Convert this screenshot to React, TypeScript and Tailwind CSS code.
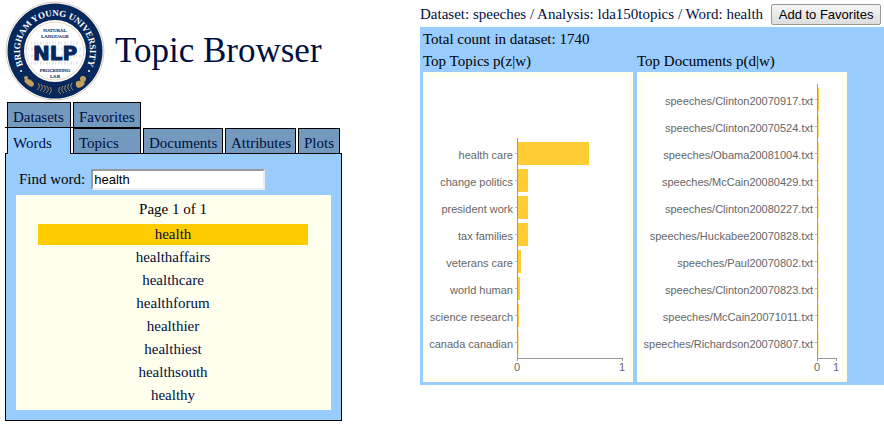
type Datum = { label: string; value: number; opacity?: number };

const topics: Datum[] = [
  { label: "health care", value: 71 },
  { label: "change politics", value: 10 },
  { label: "president work", value: 10 },
  { label: "tax families", value: 10 },
  { label: "veterans care", value: 3 },
  { label: "world human", value: 2 },
  { label: "science research", value: 1 },
  { label: "canada canadian", value: 1, opacity: 0.5 },
];

const documents: Datum[] = [
  { label: "speeches/Clinton20070917.txt", value: 1, opacity: 1 },
  { label: "speeches/Clinton20070524.txt", value: 1, opacity: 0.7 },
  { label: "speeches/Obama20081004.txt", value: 1, opacity: 0.6 },
  { label: "speeches/McCain20080429.txt", value: 1, opacity: 0.5 },
  { label: "speeches/Clinton20080227.txt", value: 1, opacity: 0.5 },
  { label: "speeches/Huckabee20070828.txt", value: 1, opacity: 0.4 },
  { label: "speeches/Paul20070802.txt", value: 1, opacity: 0.4 },
  { label: "speeches/Clinton20070823.txt", value: 1, opacity: 0.4 },
  { label: "speeches/McCain20071011.txt", value: 1, opacity: 0.4 },
  { label: "speeches/Richardson20070807.txt", value: 1, opacity: 0.4 },
];

const words = [
  "health",
  "healthaffairs",
  "healthcare",
  "healthforum",
  "healthier",
  "healthiest",
  "healthsouth",
  "healthy",
];

function Logo() {
  const waves = [0, 1, 2, 3, 4];
  return (
    <svg viewBox="0 0 100 100" className="size-[100px] shrink-0" role="img" aria-label="BYU NLP Lab">
      <defs>
        <path id="ring" d="M 22 71 A 35 35 0 1 1 78 71" />
      </defs>
      <circle cx="50" cy="50" r="49" fill="#fff" stroke="#d8cdb8" strokeWidth="1" />
      <circle cx="50" cy="50" r="47.500" fill="#06285c" />
      <circle cx="50" cy="50" r="31" fill="#fff" />
      <circle cx="50" cy="50" r="29" fill="#fff" stroke="#e3d8bf" strokeWidth="1" />
      <text fill="#fff" className="font-['Liberation_Serif',serif] text-[9px] font-bold">
        <textPath href="#ring" startOffset="50%" textAnchor="middle">
          BRIGHAM YOUNG UNIVERSITY
        </textPath>
      </text>
      <circle cx="16" cy="70" r="1" fill="#fff" />
      <circle cx="84" cy="70" r="1" fill="#fff" />
      <g stroke="#e4e7ec" strokeWidth="3" strokeDasharray="1 2 2 1">
        <path d="M 26 42 H 74" />
        <path d="M 23 48 H 77" />
        <path d="M 23 55 H 77" />
        <path d="M 26 62 H 74" />
      </g>
      <g fill="#17335f" textAnchor="middle" className="font-['Liberation_Serif',serif] text-[5px]">
        <g strokeWidth="0.2" stroke="#17335f">
          <text x="50" y="31">NATURAL</text>
          <text x="50" y="37">LANGUAGE</text>
          <text x="50" y="71">PROCESSING</text>
          <text x="50" y="77">LAB</text>
        </g>
      </g>
      <text x="50" y="59" textAnchor="middle" fill="#06285c" stroke="#06285c" className="font-['DejaVu_Sans',sans-serif] text-[20px] font-bold">NLP</text>
      <g fill="#c2a05c">
        <circle cx="21" cy="77" r="2" />
        <path d="M 19 80 Q 23 76 27 80 Q 31 83 27 86 Q 23 85 19 80 Z" />
        <circle cx="78" cy="78" r="3" />
        <path d="M 71 81 Q 75 78 80 82 Q 79 86 73 87 Q 70 85 71 81 Z" />
      </g>
      <g fill="none" stroke="#a98f5c" strokeWidth="1">
        {waves.map((i) => (
          <path key={i} d={`M ${33 + i * 3} ${82 + i} q 3 4 -1 7`} />
        ))}
        {waves.map((i) => (
          <path key={i} d={`M ${67 - i * 3} ${82 + i} q -3 4 1 7`} />
        ))}
      </g>
    </svg>
  );
}

function BarChart({ title, data, axisX, axisEnd, top }: {
  title: string;
  data: Datum[];
  axisX: number;
  axisEnd: number;
  top: number;
}) {
  return (
    <section className="w-[210px]">
      <h2 className="pt-[2px] leading-[21px] whitespace-nowrap">{title}</h2>
      <div className="bg-[#ffffee] p-[5px]">
        <svg viewBox="0 0 200 300" className="block w-full bg-white font-['Liberation_Sans',Arial,sans-serif] text-[11px]">
          {data.map((d, i) => (
            <g key={d.label}>
              <rect x={axisX + 1} y={top + 4 + i * 27} width={d.value} height="23" fill="#ffcc33" opacity={d.opacity ?? 1} />
              <rect x={axisX - 2} y={top + 15 + i * 27} width="2" height="1" fill="#bbb" />
              <text x={axisX - 4} y={top + 21 + i * 27} textAnchor="end" fill="#666">{d.label}</text>
            </g>
          ))}
          <g fill="#999">
            <rect x={axisX} y={top} width="1" height={284 - top} />
            <rect x={axisX} y="281" width={axisEnd - axisX + 1} height="1" />
            <rect x={axisEnd} y="281" width="1" height="3" />
          </g>
          <g fill="#666" textAnchor="middle">
            <text x={axisX} y="294">0</text>
            <text x={axisEnd} y="294">1</text>
          </g>
        </svg>
      </div>
    </section>
  );
}

const tab = "block border border-b-0 border-black bg-[#7399bf] px-[5px] pt-[3px] leading-[22px]";

export default function App() {
  return (
    <div className="flex items-start bg-white font-['Liberation_Serif','Times_New_Roman',serif] text-[15px] text-black">
      <aside className="w-[420px] shrink-0 pt-px pr-[78px] pl-[5px] text-[#000f3f]">
        <header className="flex items-center gap-[10px]">
          <Logo />
          <h1 className="text-[35px] leading-[40px] whitespace-nowrap">Topic Browser</h1>
        </header>
        <nav className="relative z-10 pt-px">
          <div className="flex">
            <div className="flex gap-[2px] border-b border-black pl-[2px]">
              <a href="#datasets" className={`${tab} h-[25px] w-[64px]`}>Datasets</a>
              <a href="#favorites" className={`${tab} h-[25px] w-[68px]`}>Favorites</a>
            </div>
          </div>
          <div className="-mb-px flex gap-[2px] pl-[2px]">
            <a href="#words" className="block h-[26px] w-[64px] border-x border-black bg-[#99ccff] px-[5px] pt-[4px] leading-[22px]">Words</a>
            <a href="#topics" className={`${tab} mb-px h-[25px] w-[68px]`}>Topics</a>
            <a href="#documents" className={`${tab} mb-px h-[25px] w-[80px]`}>Documents</a>
            <a href="#attributes" className={`${tab} mb-px h-[25px] w-[71px]`}>Attributes</a>
            <a href="#plots" className={`${tab} mb-px h-[25px] w-[42px]`}>Plots</a>
          </div>
        </nav>
        <div className="border border-black bg-[#99ccff] px-[10px] pt-[15px] pb-[10px]">
          <div className="flex items-center gap-[6px] pl-[3px] leading-[21px] text-black">
            <label htmlFor="find">Find word:</label>
            <input id="find" defaultValue="health" className="h-[21px] w-[174px] border-2 border-t-[#999] border-r-[#eee] border-b-[#eee] border-l-[#999] bg-white px-px font-['Liberation_Sans',Arial,sans-serif] text-[13px]" />
          </div>
          <div className="mt-[5px] bg-[#ffffee] pt-[3px] pr-[23px] pb-[2px] pl-[22px] text-center">
            <p className="pb-[3px] leading-[23px] text-black">Page 1 of 1</p>
            <ul>
              {words.map((w) => (
                <li key={w} className="pb-[2px]">
                  <a href={`#${w}`} className={w === "health" ? "block bg-[#ffcc00] leading-[21px]" : "block leading-[21px]"}>{w}</a>
                </li>
              ))}
            </ul>
          </div>
        </div>
      </aside>
      <main className="min-w-0 flex-1">
        <div className="flex h-[27px] items-center gap-[8px] pt-[2px] whitespace-nowrap">
          <nav className="text-[#000f3f]">
            <a href="#dataset">Dataset: speeches</a> / <a href="#analysis">Analysis: lda150topics</a> / <a href="#word">Word: health</a>
          </nav>
          <button type="button" className="h-[21px] w-[110px] rounded-[2px] border border-[#999] bg-linear-to-b from-[#f6f6f6] to-[#dedede] font-['Liberation_Sans',Arial,sans-serif] text-[13px] leading-[19px]">Add to Favorites</button>
        </div>
        <div className="bg-[#99ccff] px-[3px] pb-[3px]">
          <p className="pt-[3px] leading-[19px]">Total count in dataset: 1740</p>
          <div className="flex gap-[4px]">
            <BarChart title="Top Topics p(z|w)" data={topics} axisX={89} axisEnd={194} top={61} />
            <BarChart title="Top Documents p(d|w)" data={documents} axisX={175} axisEnd={194} top={7} />
          </div>
        </div>
      </main>
    </div>
  );
}
